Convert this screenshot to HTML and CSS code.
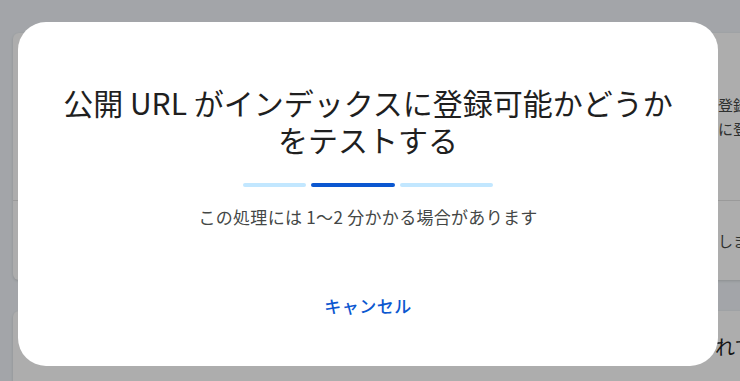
FILE: index.html
```html
<!DOCTYPE html>
<html lang="ja">
<head>
    <meta charset="UTF-8">
    <meta name="viewport" content="width=device-width, initial-scale=1.0">
    <title>URL 検査</title>
    <link rel="stylesheet" href="styles.css">
</head>
<body>
    <!-- Page behind the dialog -->
    <main class="page">
        <section class="card">
            <div class="card-section card-top">
                <div class="card-row">
                    <div class="row-label"></div>
                    <div class="row-text">
                        <p>登録されています</p>
                        <p>に登録されました</p>
                    </div>
                </div>
            </div>
            <div class="card-section card-bottom">
                <div class="card-row">
                    <div class="row-label"></div>
                    <div class="row-text">
                        <p>しますか</p>
                    </div>
                </div>
            </div>
        </section>

        <section class="card card-second">
            <div class="card-row">
                <div class="row-label"></div>
                <div class="row-text row-strong">
                    <p>れています</p>
                </div>
            </div>
        </section>
    </main>

    <!-- Modal dialog -->
    <div class="scrim">
        <div class="dialog" role="dialog" aria-labelledby="dialogTitle">
            <h1 class="dialog-title" id="dialogTitle">公開 URL がインデックスに登録可能かどうか<br>をテストする</h1>

            <div class="progress" aria-hidden="true">
                <span class="progress-seg progress-seg-a"></span>
                <span class="progress-seg progress-seg-active"></span>
                <span class="progress-seg progress-seg-b"></span>
            </div>

            <p class="dialog-note">この処理には 1〜2 分かかる場合があります</p>

            <div class="dialog-actions">
                <button class="text-button" type="button">キャンセル</button>
            </div>
        </div>
    </div>
</body>
</html>
```

FILE: styles.css
```css
html, body {
    margin: 0;
    padding: 0;
    height: 100%;
    overflow: hidden;
}

body {
    font-family: 'Noto Sans CJK JP', 'Roboto', 'Noto Sans', sans-serif;
    background-color: #f0f4f9;
    color: #1f1f1f;
}

/* ---------- background page ---------- */

.page {
    display: flex;
    flex-direction: column;
    gap: 31px;
    padding: 33px 0 0 13px;
    margin-right: -40px;
}

.card {
    background-color: #ffffff;
    border-radius: 6px;
    box-shadow: 0 1px 3px rgba(0, 0, 0, 0.15);
    overflow: hidden;
}

.card-section + .card-section {
    border-top: 1px solid #e3e3e3;
}

.card-top {
    height: 167px;
    box-sizing: border-box;
    padding-top: 60px;
}

.card-bottom {
    height: 79px;
    display: flex;
    align-items: center;
}

.card-row {
    display: grid;
    grid-template-columns: 705px 1fr;
    width: 100%;
}

.row-text p {
    margin: 0;
    font-size: 15px;
    line-height: 24px;
    color: #444746;
    white-space: nowrap;
}

.card-second {
    padding-top: 22px;
    height: 200px;
    border-radius: 6px 6px 0 0;
}

.row-strong p {
    font-size: 20px;
    line-height: 28px;
    color: #1f1f1f;
    margin-left: -3px;
}

/* ---------- dialog ---------- */

.scrim {
    position: fixed;
    inset: 0;
    background-color: rgba(0, 0, 0, 0.32);
    display: flex;
    align-items: flex-start;
    padding: 22px 0 0 18px;
}

.dialog {
    width: 700px;
    box-sizing: border-box;
    padding: 62px 30px 40px;
    background-color: #ffffff;
    border-radius: 28px;
    display: flex;
    flex-direction: column;
    align-items: center;
    text-align: center;
}

.dialog-title {
    margin: 0;
    font-size: 30px;
    font-weight: 400;
    line-height: 37px;
    color: #1f1f1f;
}

.progress {
    display: flex;
    gap: 5px;
    width: 250px;
    height: 4px;
    margin-top: 25px;
}

.progress-seg {
    display: block;
    height: 100%;
    border-radius: 2px;
    background-color: #c2e7ff;
}

.progress-seg-a {
    width: 63px;
}

.progress-seg-active {
    width: 84px;
    background-color: #0b57d0;
}

.progress-seg-b {
    width: 93px;
}

.dialog-note {
    margin: 18px 0 0;
    font-size: 17px;
    letter-spacing: 0.3px;
    line-height: 24px;
    color: #444746;
}

.dialog-actions {
    margin-top: 57px;
    display: flex;
    justify-content: center;
}

.text-button {
    font-family: inherit;
    font-size: 17px;
    font-weight: 500;
    letter-spacing: 0.5px;
    line-height: 24px;
    color: #0b57d0;
    background: none;
    border: none;
    border-radius: 20px;
    height: 40px;
    padding: 0 12px;
    cursor: pointer;
}
```
